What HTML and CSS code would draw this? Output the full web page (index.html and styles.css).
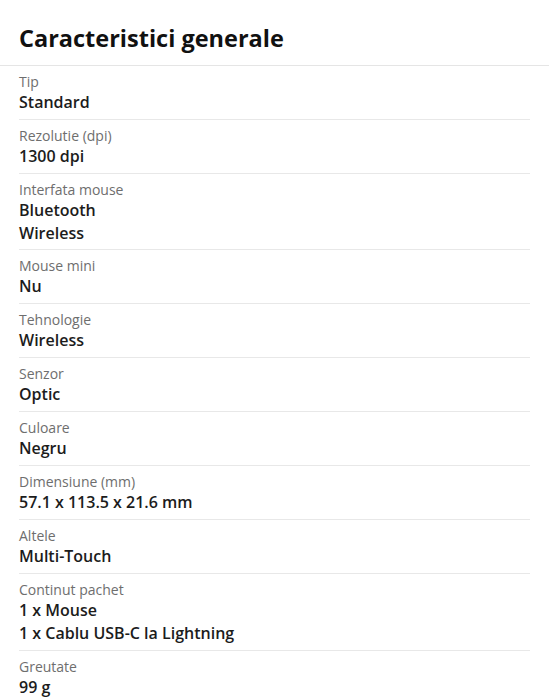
FILE: index.html
```html
<!DOCTYPE html>
<html lang="ro">
<head>
  <meta charset="UTF-8" />
  <meta name="viewport" content="width=device-width, initial-scale=1.0" />
  <title>Caracteristici generale</title>
  <link rel="stylesheet" href="styles.css">
</head>
<body>
  <!-- Section title -->
  <div class="specs-header">
    <h2>Caracteristici generale</h2>
  </div>

  <!-- Spec rows -->
  <ul class="specs-list">
    <li class="spec-row">
      <span class="spec-label">Tip</span>
      <span class="spec-value">Standard</span>
    </li>
    <li class="spec-row">
      <span class="spec-label">Rezolutie (dpi)</span>
      <span class="spec-value">1300 dpi</span>
    </li>
    <li class="spec-row">
      <span class="spec-label">Interfata mouse</span>
      <span class="spec-value">Bluetooth</span>
      <span class="spec-value">Wireless</span>
    </li>
    <li class="spec-row">
      <span class="spec-label">Mouse mini</span>
      <span class="spec-value">Nu</span>
    </li>
    <li class="spec-row">
      <span class="spec-label">Tehnologie</span>
      <span class="spec-value">Wireless</span>
    </li>
    <li class="spec-row">
      <span class="spec-label">Senzor</span>
      <span class="spec-value">Optic</span>
    </li>
    <li class="spec-row">
      <span class="spec-label">Culoare</span>
      <span class="spec-value">Negru</span>
    </li>
    <li class="spec-row">
      <span class="spec-label">Dimensiune (mm)</span>
      <span class="spec-value">57.1 x 113.5 x 21.6 mm</span>
    </li>
    <li class="spec-row">
      <span class="spec-label">Altele</span>
      <span class="spec-value">Multi-Touch</span>
    </li>
    <li class="spec-row">
      <span class="spec-label">Continut pachet</span>
      <span class="spec-value">1 x Mouse</span>
      <span class="spec-value">1 x Cablu USB-C la Lightning</span>
    </li>
    <li class="spec-row">
      <span class="spec-label">Greutate</span>
      <span class="spec-value">99 g</span>
    </li>
  </ul>
</body>
</html>
```

FILE: styles.css
```css
* {
  margin: 0;
  padding: 0;
  box-sizing: border-box;
}

body {
  font-family: 'Open Sans', sans-serif;
  background-color: #fff;
  color: #111;
}

/* Title bar */
.specs-header {
  height: 66px;
  padding: 22px 19px 0;
  border-bottom: 1px solid #e5e5e5;
}
.specs-header h2 {
  font-size: 23.5px;
  line-height: 32px;
  font-weight: 700;
  color: #111;
}

/* Spec list */
.specs-list {
  list-style: none;
  margin: 0 19px;
}

.spec-row {
  display: flex;
  flex-direction: column;
  padding: 6px 0 5px;
  border-bottom: 1px solid #e8e8e8;
}
.spec-row:nth-child(3) {
  padding-bottom: 4px;
}

.spec-label {
  font-size: 14px;
  line-height: 19px;
  color: #6e6e6e;
}

.spec-value {
  font-size: 16px;
  line-height: 23px;
  font-weight: 600;
  color: #1c1c1c;
}
```
